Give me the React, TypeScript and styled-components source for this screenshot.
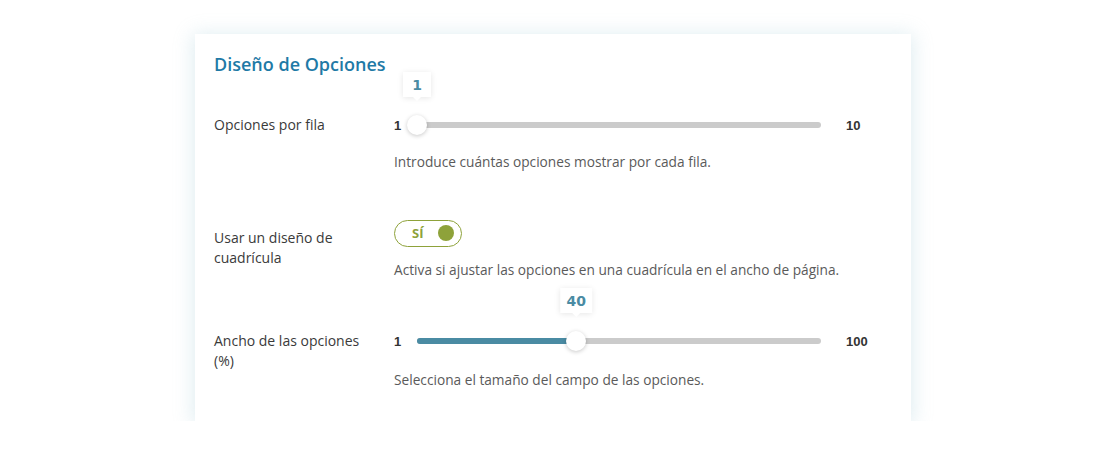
import React from 'react';
import styled, {createGlobalStyle} from 'styled-components';

const GlobalStyle = createGlobalStyle`
  body {
    margin: 0;
    background: #ffffff;
    font-family: 'Open Sans', 'Noto Sans', sans-serif;
    color: #3c3c3c;
  }
`;

const colors = {
  title: '#1f7aa6',
  teal: '#4a8ba3',
  track: '#cbcbcb',
  olive: '#8ea23a',
  text: '#3a3a3a',
  muted: '#5a5a5a',
};

const Page = styled.div`
  display: flex;
  justify-content: center;
  padding-top: 34px;
`;

const Card = styled.section`
  width: 716px;
  box-sizing: border-box;
  background: #fff;
  padding: 18px 19px 31px;
  box-shadow: 0 2px 18px 2px rgba(150, 195, 210, 0.3);
  display: flex;
  flex-direction: column;
  gap: 46px;
`;

const Title = styled.h2`
  margin: 0 0 -12px;
  font-size: 18px;
  line-height: 24px;
  font-weight: 600;
  color: ${colors.title};
`;

const Row = styled.div`
  display: grid;
  grid-template-columns: 180px 1fr;
  align-items: start;
`;

const Label = styled.div<{$offset?: number}>`
  margin-top: ${p => p.$offset ?? 5}px;
  font-size: 14px;
  line-height: 20px;
  color: ${colors.text};
  max-width: 152px;
`;

const Control = styled.div`
  display: flex;
  flex-direction: column;
`;

const ControlLine = styled.div`
  height: 30px;
  display: flex;
  align-items: center;
`;

const Description = styled.p<{$gap?: number}>`
  margin: ${p => p.$gap ?? 12}px 0 0;
  font-size: 13.7px;
  line-height: 20px;
  color: ${colors.muted};
`;

const MinMax = styled.span<{$side: 'min' | 'max'}>`
  font-family: 'Liberation Sans', Arial, sans-serif;
  font-size: 13px;
  font-weight: 700;
  color: #333;
  width: ${p => (p.$side === 'min' ? '23px' : 'auto')};
  margin-left: ${p => (p.$side === 'max' ? '25px' : '0')};
`;

const Track = styled.div`
  position: relative;
  width: 404px;
  height: 6px;
  border-radius: 3px;
  background: ${colors.track};
`;

const Fill = styled.div`
  position: absolute;
  left: 0;
  top: 0;
  bottom: 0;
  border-radius: 3px;
  background: ${colors.teal};
`;

const Thumb = styled.div`
  position: absolute;
  top: 50%;
  width: 20px;
  height: 20px;
  margin-left: -10px;
  margin-top: -10px;
  border-radius: 50%;
  background: #fff;
  box-shadow: 0 1px 4px rgba(0, 0, 0, 0.22);
`;

const Tooltip = styled.div`
  position: absolute;
  bottom: 38px;
  left: 50%;
  transform: translateX(-50%);
  min-width: 28px;
  height: 25px;
  padding: 0 6px;
  box-sizing: border-box;
  display: flex;
  align-items: center;
  justify-content: center;
  background: #fff;
  font-family: 'DejaVu Sans', sans-serif;
  font-size: 14px;
  font-weight: 700;
  color: ${colors.teal};
  box-shadow: 0 1px 6px rgba(0, 0, 0, 0.1);

  &::after {
    content: '';
    position: absolute;
    left: 50%;
    bottom: -4px;
    margin-left: -4px;
    border-left: 4px solid transparent;
    border-right: 4px solid transparent;
    border-top: 4px solid #fff;
  }
`;

const Toggle = styled.button`
  width: 68px;
  height: 27px;
  box-sizing: border-box;
  border: 1px solid ${colors.olive};
  border-radius: 14px;
  background: #fff;
  display: flex;
  align-items: center;
  justify-content: space-between;
  padding: 0 7px 0 17px;
  cursor: pointer;
`;

const ToggleText = styled.span`
  font-family: 'Open Sans', sans-serif;
  font-size: 13px;
  font-weight: 700;
  color: ${colors.olive};
`;

const ToggleDot = styled.span`
  width: 16px;
  height: 16px;
  border-radius: 50%;
  background: ${colors.olive};
`;

type SliderProps = {min: number; max: number; value: number; filled?: boolean};

const Slider = ({min, max, value, filled}: SliderProps) => {
  const pct = ((value - min) / (max - min)) * 100;
  return (
    <ControlLine>
      <MinMax $side="min">{min}</MinMax>
      <Track>
        {filled && <Fill style={{width: `${pct}%`}} />}
        <Thumb style={{left: `${pct}%`}}>
          <Tooltip>{value}</Tooltip>
        </Thumb>
      </Track>
      <MinMax $side="max">{max}</MinMax>
    </ControlLine>
  );
};

export default function App() {
  return (
    <>
      <GlobalStyle />
      <Page>
        <Card>
          <Title>Diseño de Opciones</Title>
          <Row>
            <Label>Opciones por fila</Label>
            <Control>
              <Slider min={1} max={10} value={1} />
              <Description>Introduce cuántas opciones mostrar por cada fila.</Description>
            </Control>
          </Row>
          <Row>
            <Label $offset={10}>Usar un diseño de cuadrícula</Label>
            <Control>
              <ControlLine>
                <Toggle>
                  <ToggleText>SÍ</ToggleText>
                  <ToggleDot />
                </Toggle>
              </ControlLine>
              <Description>
                Activa si ajustar las opciones en una cuadrícula en el ancho de página.
              </Description>
            </Control>
          </Row>
          <Row>
            <Label>Ancho de las opciones (%)</Label>
            <Control>
              <Slider min={1} max={100} value={40} filled />
              <Description $gap={14}>Selecciona el tamaño del campo de las opciones.</Description>
            </Control>
          </Row>
        </Card>
      </Page>
    </>
  );
}
